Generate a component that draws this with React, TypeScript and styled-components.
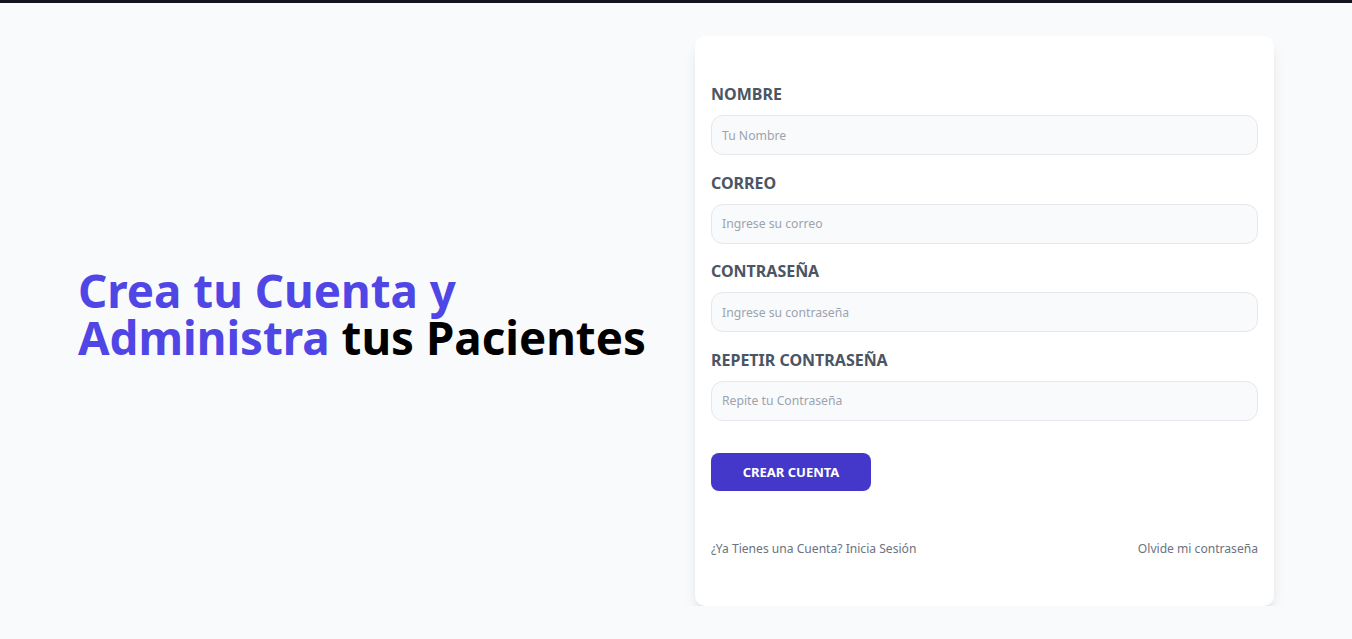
import React from "react";
import styled, { createGlobalStyle } from "styled-components";

const Global = createGlobalStyle`
  html, body { margin: 0; padding: 0; background: #f9fafb; }
  body { font-family: "Noto Sans", "Open Sans", sans-serif; }
  * { box-sizing: border-box; }
`;

const TopBar = styled.div`
  height: 3px;
  background: #15141f;
`;

const Page = styled.main`
  display: grid;
  grid-template-columns: 578px 579px;
  align-items: center;
  column-gap: 39px;
  width: 1280px;
  margin: 0 auto;
  padding: 33px 0 0 42px;
`;

const HeadingCol = styled.div`
  padding-bottom: 15px;
`;

const Heading = styled.h1`
  margin: 0;
  font-family: "Noto Sans", sans-serif;
  font-weight: 700;
  font-size: 45.7px;
  line-height: 47px;
  color: #4f46e5;
`;

const Line = styled.span`
  display: block;
  white-space: nowrap;
`;

const Dark = styled.span`
  color: #000;
`;

const Card = styled.div`
  background: #fff;
  border-radius: 10px;
  box-shadow: 0 10px 15px -3px rgba(0, 0, 0, 0.1), 0 4px 6px -4px rgba(0, 0, 0, 0.1);
  padding: 44px 16px 47px;
`;

const Field = styled.div`
  & + & {
    margin-top: 13.6px;
  }
`;

const Label = styled.label`
  display: block;
  font-family: "Noto Sans", sans-serif;
  font-weight: 700;
  font-size: 16px;
  line-height: 28px;
  color: #4b5563;
  text-transform: uppercase;
`;

const Input = styled.input`
  display: block;
  width: 100%;
  height: 40px;
  margin-top: 7px;
  padding: 0 10px;
  border: 1px solid #e5e7eb;
  border-radius: 12px;
  background: #f9fafb;
  font-family: "Noto Sans", sans-serif;
  font-size: 12.2px;
  color: #374151;
  outline: none;
  &::placeholder {
    color: #9ca3af;
  }
`;

const Button = styled.button`
  display: block;
  width: 160px;
  height: 38px;
  margin-top: 32.3px;
  border: none;
  border-radius: 8px;
  background: #4338ca;
  color: #fff;
  font-family: "Noto Sans", sans-serif;
  font-weight: 700;
  font-size: 13px;
  text-transform: uppercase;
  cursor: pointer;
`;

const Footer = styled.nav`
  display: flex;
  justify-content: space-between;
  margin-top: 48px;
`;

const FooterLink = styled.a`
  font-family: "Noto Sans", sans-serif;
  font-size: 12.1px;
  line-height: 20px;
  color: #6b7280;
  text-decoration: none;
`;

const fields = [
  { label: "Nombre", placeholder: "Tu Nombre", type: "text" },
  { label: "Correo", placeholder: "Ingrese su correo", type: "email" },
  { label: "Contraseña", placeholder: "Ingrese su contraseña", type: "password" },
  { label: "Repetir Contraseña", placeholder: "Repite tu Contraseña", type: "password" },
];

export default function App() {
  return (
    <>
      <Global />
      <TopBar />
      <Page>
        <HeadingCol>
          <Heading>
            <Line>Crea tu Cuenta y</Line>
            <Line>
              Administra <Dark>tus Pacientes</Dark>
            </Line>
          </Heading>
        </HeadingCol>
        <Card>
          <form onSubmit={(e) => e.preventDefault()}>
            {fields.map((f) => (
              <Field key={f.label}>
                <Label>{f.label}</Label>
                <Input type={f.type} placeholder={f.placeholder} />
              </Field>
            ))}
            <Button type="submit">Crear Cuenta</Button>
          </form>
          <Footer>
            <FooterLink href="#">¿Ya Tienes una Cuenta? Inicia Sesión</FooterLink>
            <FooterLink href="#">Olvide mi contraseña</FooterLink>
          </Footer>
        </Card>
      </Page>
    </>
  );
}
